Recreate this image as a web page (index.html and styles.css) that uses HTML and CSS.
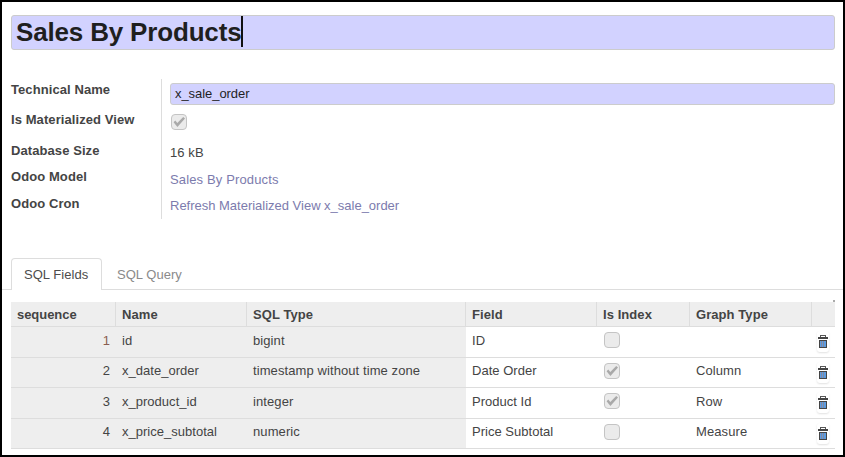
FILE: index.html
```html
<!DOCTYPE html>
<html lang="en">
<head>
<meta charset="utf-8">
<title>Sales By Products</title>
<link rel="stylesheet" href="styles.css">
</head>
<body>
<svg class="defs" width="0" height="0" aria-hidden="true">
  <symbol id="check" viewBox="0 0 14 14"><path d="M1.6 7.2L3.3 5.6L5.3 7.9L11.2 2L13 3.5L5.4 11.9Z" fill="#a9a9a9"/></symbol>
  <symbol id="trash" viewBox="0 0 10 13"><path d="M2 0H8V2H7V1H3V2H2Z" fill="#555"/><path d="M0 2H10V4H0Z" fill="#444"/><path d="M1 5H9V13H1Z" fill="#444"/><path d="M2 6H8V12H2Z" fill="#5b9be0"/><path d="M3 6H4V12H3ZM5 6H6V12H5Z" fill="#8389a0"/></symbol>
</svg>
<main class="sheet">
  <h1 class="title"><span>Sales By Products</span><i class="caret"></i></h1>
  <section class="form">
    <div class="labels">
      <div>Technical Name</div><div>Is Materialized View</div><div>Database Size</div><div>Odoo Model</div><div>Odoo Cron</div>
    </div>
    <div class="values">
      <div class="input">x_sale_order</div>
      <div class="check-row"><span class="box"><svg><use href="#check"/></svg></span></div>
      <div class="size">16 kB</div>
      <a class="model">Sales By Products</a>
      <a class="cron">Refresh Materialized View x_sale_order</a>
    </div>
  </section>
  <nav class="tabs"><a class="tab active">SQL Fields</a><a class="tab">SQL Query</a></nav>
  <section class="grid">
    <i class="corner"></i>
    <div class="row head"><div>sequence</div><div>Name</div><div>SQL Type</div><div>Field</div><div>Is Index</div><div>Graph Type</div><div></div></div>
    <div class="row tall"><div class="num first">1</div><div class="tech">id</div><div>bigint</div><div>ID</div><div><span class="box"></span></div><div></div><div><span class="del"><svg><use href="#trash"/></svg></span></div></div>
    <div class="row"><div class="num">2</div><div class="tech">x_date_order</div><div>timestamp without time zone</div><div>Date Order</div><div><span class="box"><svg><use href="#check"/></svg></span></div><div>Column</div><div><span class="del"><svg><use href="#trash"/></svg></span></div></div>
    <div class="row tall"><div class="num">3</div><div class="tech">x_product_id</div><div>integer</div><div>Product Id</div><div><span class="box"><svg><use href="#check"/></svg></span></div><div>Row</div><div><span class="del"><svg><use href="#trash"/></svg></span></div></div>
    <div class="row"><div class="num">4</div><div class="tech">x_price_subtotal</div><div>numeric</div><div>Price Subtotal</div><div><span class="box"></span></div><div>Measure</div><div><span class="del"><svg><use href="#trash"/></svg></span></div></div>
  </section>
</main>
</body>
</html>
```
FILE: styles.css
```css
* { box-sizing: border-box; }
body { margin: 0; font: 13px/16px "Liberation Sans", Arial, sans-serif; color: #444; letter-spacing: .09px; }
.defs { display: block; }
.sheet { width: 845px; height: 457px; border: 2px solid #000; background: #fff; overflow: hidden; display: flex; flex-direction: column; }
.title { margin: 13px 8px 0 9px; height: 35px; flex: none; border: 1px solid #ccc; border-radius: 3px; background: #d2d2ff; padding: 0 0 2px 4px; display: flex; align-items: center; font-size: 26px; line-height: 32px; letter-spacing: -.17px; color: #1f1f1f; }
.caret { width: 2px; height: 31px; background: #111; }
.form { margin: 29px 8px 0 9px; height: 140px; flex: none; display: flex; }
.labels { width: 151px; border-right: 1px solid #ddd; font-weight: bold; padding-top: 3px; display: grid; grid-template-rows: 30px 31px 26px 27px 16px; align-content: start; letter-spacing: .08px; }
.values { flex: 1; padding: 4px 0 0 8px; display: flex; flex-direction: column; }
.input { height: 22px; border: 1px solid #ccc; border-radius: 3px; background: #d2d2ff; padding: 2px 4px; color: #1f1f1f; letter-spacing: -.06px; }
.check-row { padding: 9px 0 0 1px; height: 40px; }
.box { display: block; width: 16px; height: 16px; border: 1px solid #c4c4c4; border-radius: 4px; background: #ebebeb; }
.box svg { display: block; width: 14px; height: 14px; }
.size { height: 27px; }
.model { height: 26px; letter-spacing: .14px; }
.cron { letter-spacing: -.01px; }
.model, .cron { color: #7c7bad; }
.tabs { flex: none; margin-top: 39px; height: 32px; display: flex; padding-left: 9px; border-bottom: 1px solid #ddd; }
.tab { height: 32px; padding: 8px 12px; color: #8a8a8a; border: 1px solid transparent; border-bottom: 0; letter-spacing: .04px; }
.tab + .tab { padding-left: 14px; }
.tab.active { width: 91px; color: #4c4c4c; background: #fff; border-color: #ddd; border-radius: 4px 4px 0 0; }
.grid { margin: 12px 8px 0 9px; position: relative; }
.corner { position: absolute; right: 0; top: -2px; width: 2px; height: 2px; background: #aaa; }
.row { display: grid; grid-template-columns: 105px 131px 219px 131px 93px 122px 23px; height: 30px; border-bottom: 1px solid #ddd; }
.row > div { padding: 5px 6px 0 6px; white-space: nowrap; }
.tall { height: 31px; }
.tall > div { padding-top: 6px; }
.row > div:nth-child(-n+3) { background: #eee; }
.row > div:nth-child(4), .row .tech { letter-spacing: .02px; }
.row .num { text-align: right; }
.row .first { color: #8a5d50; }
.row.head { height: 25px; background: #eee; font-weight: bold; }
.row.head > div { padding: 5px 0 0 6px; border-right: 1px solid #ddd; letter-spacing: .07px; }
.row.head > div:first-child { letter-spacing: -.05px; }
.row.head > div:last-child { border: 0; }
.row .box { margin-left: 1px; }
.row:not(.head) > div:nth-child(5) { padding-top: 5px; }
.row:not(.head) > div:last-child { padding: 4px 0 0 5px; }
.del { display: block; width: 12px; height: 21px; padding: 4px 0 0 1px; border-radius: 3px; background: #fff; box-shadow: 0 1px 2px rgba(0,0,0,.12); }
.del svg { display: block; width: 10px; height: 13px; }
```
